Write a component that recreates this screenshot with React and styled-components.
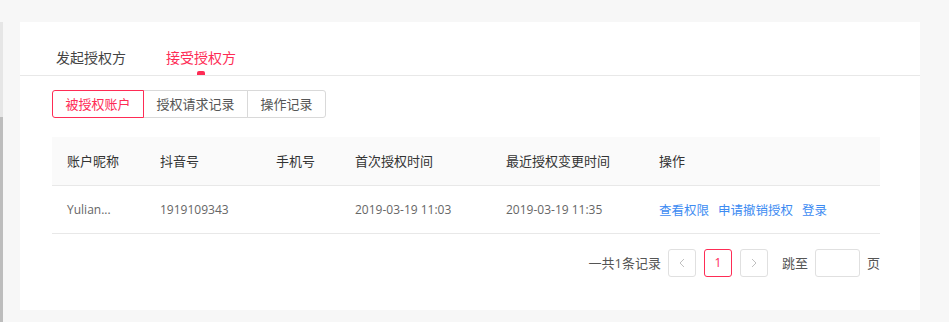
import styled, { createGlobalStyle } from "styled-components";

const GlobalStyle = createGlobalStyle`
  html, body {
    margin: 0;
    padding: 0;
    background: #f7f7f7;
    font-family: "Open Sans", "Noto Sans CJK SC", sans-serif;
  }
  * {
    box-sizing: border-box;
  }
`;

const Page = styled.div`
  display: flex;
  height: 322px;
  padding-top: 22px;
  overflow: hidden;
`;

const Rail = styled.div`
  display: flex;
  flex-direction: column;
  width: 3px;
  height: 300px;
`;

const RailPart = styled.div`
  height: ${(p) => p.$h}px;
  background: ${(p) => p.$color};
`;

const Card = styled.div`
  width: 900px;
  height: 288px;
  margin-left: 17px;
  background: #fff;
`;

const TabBar = styled.div`
  display: flex;
  gap: 40px;
  padding: 26px 0 0 36px;
  border-bottom: 1px solid #e8e8e8;
`;

const Tab = styled.div`
  position: relative;
  padding-bottom: 7px;
  font-size: 14px;
  line-height: 20px;
  color: ${(p) => (p.$active ? "#fe2c55" : "#444")};
  cursor: pointer;

  &::after {
    content: "";
    display: ${(p) => (p.$active ? "block" : "none")};
    position: absolute;
    left: 50%;
    bottom: 0;
    width: 8px;
    height: 4px;
    margin-left: -4px;
    border-radius: 2px 2px 0 0;
    background: #fe2c55;
  }
`;

const Body = styled.div`
  padding: 14px 40px 0 32px;
`;

const Segments = styled.div`
  display: flex;
`;

const Segment = styled.div`
  position: relative;
  z-index: ${(p) => (p.$active ? 1 : 0)};
  height: 28px;
  padding: 0 12.5px;
  margin-left: -1px;
  border: 1px solid ${(p) => (p.$active ? "#fe2c55" : "#d9d9d9")};
  font-size: 13px;
  line-height: 26px;
  color: ${(p) => (p.$active ? "#fe2c55" : "#555")};
  background: #fff;
  cursor: pointer;

  &:first-child {
    margin-left: 0;
    border-radius: 3px 0 0 3px;
  }
  &:last-child {
    border-radius: 0 3px 3px 0;
  }
`;

const Table = styled.table`
  width: 100%;
  margin-top: 19px;
  border-collapse: collapse;
  table-layout: fixed;
`;

const Th = styled.th`
  width: ${(p) => (p.$w ? `${p.$w}px` : "auto")};
  height: 48px;
  padding: 0 0 0 15px;
  background: #fafafa;
  border-bottom: 1px solid #e8e8e8;
  text-align: left;
  font-weight: 400;
  font-size: 13px;
  color: #333;
`;

const Td = styled.td`
  height: 48px;
  padding: 0 0 0 15px;
  border-bottom: 1px solid #e8e8e8;
  font-size: 12px;
  color: #666;
  white-space: nowrap;
`;

const Links = styled.div`
  display: flex;
  gap: 9px;
`;

const Link = styled.a`
  font-size: 12.5px;
  color: #3d8bf2;
  cursor: pointer;
`;

const Pager = styled.div`
  display: flex;
  align-items: center;
  justify-content: flex-end;
  margin-top: 15px;
  font-size: 13px;
  color: #555;
`;

const Total = styled.span`
  margin-right: 7px;
`;

const PageBtn = styled.div`
  display: flex;
  align-items: center;
  justify-content: center;
  width: 28px;
  height: 28px;
  margin-right: 8px;
  border: 1px solid ${(p) => (p.$active ? "#fe2c55" : "#e0e0e0")};
  border-radius: 3px;
  color: ${(p) => (p.$active ? "#fe2c55" : "#bbb")};
  font-size: 12px;
`;

const JumpLabel = styled.span`
  margin-left: 6px;
`;

const JumpInput = styled.div`
  width: 45px;
  height: 28px;
  margin: 0 7px;
  border: 1px solid #e0e0e0;
  border-radius: 3px;
`;

const Chevron = ({ dir }) => (
  <svg width="6" height="10" viewBox="0 0 6 10" fill="none">
    <polyline
      points={dir === "left" ? "5,1 1,5 5,9" : "1,1 5,5 1,9"}
      stroke="#c0c0c0"
      strokeWidth="1"
    />
  </svg>
);

const columns = [
  { title: "账户昵称", w: 93 },
  { title: "抖音号", w: 116 },
  { title: "手机号", w: 79 },
  { title: "首次授权时间", w: 151 },
  { title: "最近授权变更时间", w: 153 },
  { title: "操作" },
];

const rows = [
  {
    name: "Yulian...",
    douyin: "1919109343",
    phone: "",
    first: "2019-03-19 11:03",
    last: "2019-03-19 11:35",
  },
];

export default function App() {
  return (
    <>
      <GlobalStyle />
      <Page>
        <Rail>
          <RailPart $h={95} $color="#e6e6e6" />
          <RailPart $h={205} $color="#bdbdbd" />
        </Rail>
        <Card>
          <TabBar>
            <Tab>发起授权方</Tab>
            <Tab $active>接受授权方</Tab>
          </TabBar>
          <Body>
            <Segments>
              <Segment $active>被授权账户</Segment>
              <Segment>授权请求记录</Segment>
              <Segment>操作记录</Segment>
            </Segments>
            <Table>
              <thead>
                <tr>
                  {columns.map((c) => (
                    <Th key={c.title} $w={c.w}>
                      {c.title}
                    </Th>
                  ))}
                </tr>
              </thead>
              <tbody>
                {rows.map((r) => (
                  <tr key={r.douyin}>
                    <Td>{r.name}</Td>
                    <Td>{r.douyin}</Td>
                    <Td>{r.phone}</Td>
                    <Td>{r.first}</Td>
                    <Td>{r.last}</Td>
                    <Td>
                      <Links>
                        <Link>查看权限</Link>
                        <Link>申请撤销授权</Link>
                        <Link>登录</Link>
                      </Links>
                    </Td>
                  </tr>
                ))}
              </tbody>
            </Table>
            <Pager>
              <Total>一共1条记录</Total>
              <PageBtn>
                <Chevron dir="left" />
              </PageBtn>
              <PageBtn $active>1</PageBtn>
              <PageBtn>
                <Chevron dir="right" />
              </PageBtn>
              <JumpLabel>跳至</JumpLabel>
              <JumpInput />
              <span>页</span>
            </Pager>
          </Body>
        </Card>
      </Page>
    </>
  );
}
